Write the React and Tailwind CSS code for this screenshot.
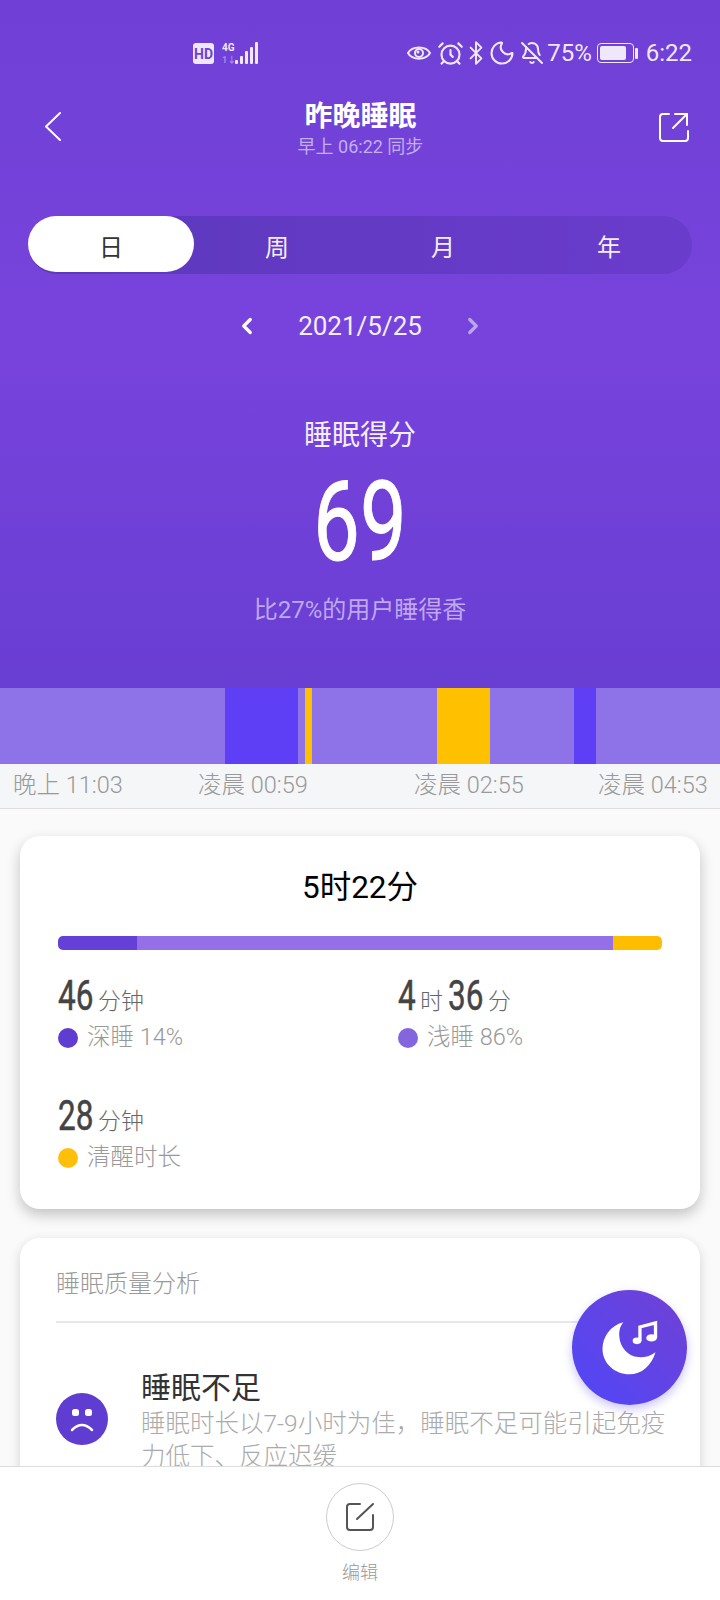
import React from "react";
import { AlarmClock, BellOff, Bluetooth, ChevronLeft, ChevronRight, Moon } from "lucide-react";

const Tab = ({ label, active }) => (
  <div
    className={
      active
        ? "h-[56px] pt-[7px] flex items-center justify-center rounded-full bg-white text-[24px] text-[#333]"
        : "h-[56px] pt-[7px] flex items-center justify-center text-[24px] text-[#f3eefc]"
    }
  >
    {label}
  </div>
);

const StatusBar = () => (
  <div className="h-[88px] pt-[42px] pl-[193px] pr-[28px] flex items-start text-[#efe8fb]">
    <div className="w-[21px] h-[21px] mt-[1px] rounded-[3px] bg-[#efe8fb] flex items-center justify-center text-[14px] leading-none font-bold text-[#6f42d6]">
      HD
    </div>
    <div className="w-[12px] ml-[8px] mt-[1px] flex flex-col">
      <span className="text-[10px] leading-[10px] font-bold">4G</span>
      <span className="text-[9px] leading-[10px] mt-[2px] font-bold text-[#a98ae8]">1↓</span>
    </div>
    <div className="h-[22px] flex items-end gap-[2px] ml-[1px]">
      <div className="w-[3px] h-[4px] rounded-[1px] bg-[#efe8fb]" />
      <div className="w-[3px] h-[8px] rounded-[1px] bg-[#efe8fb]" />
      <div className="w-[3px] h-[13px] rounded-[1px] bg-[#efe8fb]" />
      <div className="w-[3px] h-[17px] rounded-[1px] bg-[#efe8fb]" />
      <div className="w-[3px] h-[22px] rounded-[1px] bg-[#efe8fb]" />
    </div>
    <div className="ml-auto flex items-center h-[22px]">
      <svg width="24" height="18" viewBox="0 0 24 18" fill="none" stroke="currentColor" strokeWidth="2">
        <path d="M1 9 C5 1.500 19 1.500 23 9 C19 16.500 5 16.500 1 9 Z" />
        <circle cx="12" cy="9" r="4" />
        <circle cx="11" cy="8" r="1.500" fill="currentColor" stroke="none" />
      </svg>
      <AlarmClock size={27} strokeWidth={1.9} className="ml-[6px] shrink-0" />
      <Bluetooth size={26} strokeWidth={1.8} className="ml-[-1px] shrink-0" />
      <Moon size={28} strokeWidth={1.8} className="ml-[-1.500px] shrink-0" />
      <BellOff size={24} strokeWidth={2} className="ml-[4.500px] shrink-0" />
      <span className="ml-[3px] text-[24px] leading-none">75%</span>
      <div className="ml-[5px] flex items-center">
        <div className="w-[37px] h-[20px] p-[2px] rounded-[4px] border border-[#efe8fb]">
          <div className="w-[26px] h-full rounded-[2px] bg-[#efe8fb]" />
        </div>
        <div className="w-[3px] h-[11px] ml-[1px] rounded-[1px] bg-[#efe8fb]" />
      </div>
      <span className="ml-[8px] text-[24px] leading-none">6:22</span>
    </div>
  </div>
);

const Header = () => (
  <div className="h-[128px] px-[44px] pr-[31px] flex items-start justify-between">
    <svg width="18" height="31" viewBox="0 0 18 31" className="mt-[23px]" fill="none" stroke="#fff" strokeWidth="2" strokeLinecap="round" strokeLinejoin="round">
      <path d="M16 2 L2 15.500 L16 29" />
    </svg>
    <div className="flex flex-col items-center mt-[11px]">
      <div className="text-[28px] leading-[36px] font-bold text-white">昨晚睡眠</div>
      <div className="text-[18px] leading-[24px] text-[#c3aef0]">早上 06:22 同步</div>
    </div>
    <svg width="30" height="30" viewBox="0 0 30 30" className="mt-[24px]" fill="none" stroke="#fff" strokeWidth="2" strokeLinecap="round" strokeLinejoin="round">
      <path d="M10 2 H4 a3 3 0 0 0 -3 3 V26 a3 3 0 0 0 3 3 H26 a3 3 0 0 0 3 -3 V19" />
      <path d="M14 16 L28 2" />
      <path d="M16 2 H28 V13" />
    </svg>
  </div>
);

const Hero = () => (
  <div className="h-[688px] bg-linear-to-b from-[#7040d6] via-[#7743dc] to-[#693ed3]">
    <StatusBar />
    <Header />
    <div className="mx-[28px] h-[58px] rounded-full bg-linear-to-r from-[#5c38bc] to-[#6a3ccc] grid grid-cols-4 items-start">
      <Tab label="日" active />
      <Tab label="周" />
      <Tab label="月" />
      <Tab label="年" />
    </div>
    <div className="mt-[27px] h-[50px] flex items-center justify-center gap-[38px]">
      <ChevronLeft size={26} strokeWidth={3} className="text-white" />
      <span className="text-[26px] text-[#f3eefc]">2021/5/25</span>
      <ChevronRight size={26} strokeWidth={3} className="text-[#bca6ec]" />
    </div>
    <div className="mt-[65px] h-[40px] flex items-center justify-center text-[28px] text-[#f3eefc]">睡眠得分</div>
    <div className="mt-[16px] h-[100px] flex items-center justify-center">
      <span className="inline-block scale-x-[0.74] text-[112px] leading-none text-white [-webkit-text-stroke:1px_#fff]">69</span>
    </div>
    <div className="mt-[21px] h-[34px] flex items-center justify-center text-[24px] text-[#bfa8ec]">比27%的用户睡得香</div>
  </div>
);

const Chart = () => (
  <div className="h-[76px] flex">
    <div className="w-[225px] bg-[#8e72e8]" />
    <div className="w-[73px] bg-[#5e3ff5]" />
    <div className="w-[7px] bg-[#8e72e8]" />
    <div className="w-[7px] bg-[#ffc000]" />
    <div className="w-[125px] bg-[#8e72e8]" />
    <div className="w-[53px] bg-[#ffc000]" />
    <div className="w-[84px] bg-[#8e72e8]" />
    <div className="w-[22px] bg-[#5e3ff5]" />
    <div className="flex-1 bg-[#8e72e8]" />
  </div>
);

const TimeAxis = () => (
  <div className="h-[45px] pl-[13px] grid grid-cols-[185px_216px_184px_1fr] items-center whitespace-nowrap bg-[#f5f6f8] border-b border-[#dddddd] text-[23.500px] font-light text-[#999]">
    <span>晚上 11:03</span>
    <span>凌晨 00:59</span>
    <span>凌晨 02:55</span>
    <span>凌晨 04:53</span>
  </div>
);

const Unit = ({ children }) => <span className="mb-[4px] text-[23px] leading-none text-[#666] font-light">{children}</span>;

const Legend = ({ dot, children }) => (
  <div className="mt-[6px] h-[30px] flex items-center gap-[9px] text-[23.500px] font-light text-[#999]">
    <div className={dot} />
    <span>{children}</span>
  </div>
);

const SummaryCard = () => (
  <div className="h-[373px] mx-[20px] pt-[30px] px-[38px] rounded-[20px] bg-white shadow-[0_6px_14px_rgba(0,0,0,0.22)]">
    <div className="h-[44px] flex items-center justify-center text-[31.500px] text-black">5时22分</div>
    <div className="mt-[26px] h-[14px] flex rounded-[5px] overflow-hidden">
      <div className="w-[79px] bg-[#6540d6]" />
      <div className="w-[476px] bg-[#9370e8]" />
      <div className="flex-1 bg-[#ffbd00]" />
    </div>
    <div className="mt-[24px] grid grid-cols-[340px_1fr] gap-y-[41px]">
      <div>
        <div className="h-[43px] flex items-end gap-[5px] text-[#444]">
          <span className="inline-block w-[35px] origin-left scale-x-[0.75] text-[42px] leading-[42px] [-webkit-text-stroke:0.5px_#444]">46</span>
          <Unit>分钟</Unit>
        </div>
        <Legend dot="w-[20px] h-[20px] rounded-full bg-[#5f3dd0]">深睡 14%</Legend>
      </div>
      <div>
        <div className="h-[43px] flex items-end gap-[5px] text-[#444]">
          <span className="inline-block w-[17px] origin-left scale-x-[0.75] text-[42px] leading-[42px] [-webkit-text-stroke:0.5px_#444]">4</span>
          <Unit>时</Unit>
          <span className="inline-block w-[35px] origin-left scale-x-[0.75] text-[42px] leading-[42px] [-webkit-text-stroke:0.5px_#444]">36</span>
          <Unit>分</Unit>
        </div>
        <Legend dot="w-[20px] h-[20px] rounded-full bg-[#8565dd]">浅睡 86%</Legend>
      </div>
      <div>
        <div className="h-[43px] flex items-end gap-[5px] text-[#444]">
          <span className="inline-block w-[35px] origin-left scale-x-[0.75] text-[42px] leading-[42px] [-webkit-text-stroke:0.5px_#444]">28</span>
          <Unit>分钟</Unit>
        </div>
        <Legend dot="w-[20px] h-[20px] rounded-full bg-[#ffbf0a]">清醒时长</Legend>
      </div>
    </div>
  </div>
);

const QualityCard = () => (
  <div className="mt-[29px] h-[400px] mx-[20px] px-[36px] rounded-[20px] bg-white shadow-[0_4px_12px_rgba(0,0,0,0.16)]">
    <div className="h-[85px] pt-[8px] flex items-center border-b-2 border-[#e8e8e8] text-[24px] font-light text-[#999]">睡眠质量分析</div>
    <div className="mt-[46px] flex items-start gap-[33px]">
      <svg width="52" height="52" viewBox="0 0 52 52" className="mt-[24px] shrink-0">
        <circle cx="26" cy="26" r="26" fill="#5f3dd0" />
        <rect x="16" y="16" width="7" height="7" rx="2.500" fill="#fff" />
        <rect x="29" y="16" width="7" height="7" rx="2.500" fill="#fff" />
        <path d="M16 37 Q26 27 36 37" fill="none" stroke="#fff" strokeWidth="2.500" strokeLinecap="round" />
      </svg>
      <div className="w-[526px] shrink-0">
        <div className="text-[30px] leading-[38px] text-[#333]">睡眠不足</div>
        <div className="text-[24.500px] leading-[33px] font-light text-[#aaa]">睡眠时长以7-9小时为佳，睡眠不足可能引起免疫力低下、反应迟缓</div>
      </div>
    </div>
  </div>
);

const BottomBar = () => (
  <div className="flex-1 flex flex-col items-center bg-white border-t border-[#dddddd]">
    <div className="mt-[16px] w-[68px] h-[68px] rounded-full border border-[#cccccc] flex items-center justify-center">
      <svg width="30" height="30" viewBox="0 0 30 30" fill="none" stroke="#555" strokeWidth="2" strokeLinecap="round" strokeLinejoin="round">
        <path d="M15 2 H5 a3 3 0 0 0 -3 3 V25 a3 3 0 0 0 3 3 H25 a3 3 0 0 0 3 -3 V13" />
        <path d="M28 2 L12 17" />
      </svg>
    </div>
    <div className="mt-[9px] text-[18px] leading-[26px] font-light text-[#999]">编辑</div>
  </div>
);

const Fab = () => (
  <div className="absolute left-[572px] top-[1290px] w-[115px] h-[115px] rounded-full flex items-center justify-center bg-linear-to-bl from-[#7040d4] to-[#4f46f8] shadow-[0_4px_10px_rgba(80,60,220,0.3)]">
    <svg width="60" height="58" viewBox="120 115 180 175">
      <path d="M190 125 C150 135 127 170 127 205 C127 250 165 282 208 282 C245 282 275 255 287 215 C270 228 250 232 235 230 C205 228 180 200 178 170 C176 150 180 138 190 125 Z" fill="#fff" />
      <path d="M240 182 V139 L287 127 V172" fill="none" stroke="#fff" strokeWidth="10" />
      <ellipse cx="231" cy="181" rx="13" ry="10" fill="#fff" />
      <ellipse cx="275" cy="172" rx="16" ry="11" fill="#fff" />
    </svg>
  </div>
);

export default function App() {
  return (
    <div className="relative w-[720px] h-[1600px] overflow-hidden flex flex-col bg-[#fafafa] [font-family:Roboto,'Noto_Sans_CJK_SC',sans-serif]">
      <div className="h-[1466px] shrink-0 overflow-hidden">
        <Hero />
        <Chart />
        <TimeAxis />
        <div className="pt-[27px]">
          <SummaryCard />
          <QualityCard />
        </div>
      </div>
      <BottomBar />
      <Fab />
    </div>
  );
}
